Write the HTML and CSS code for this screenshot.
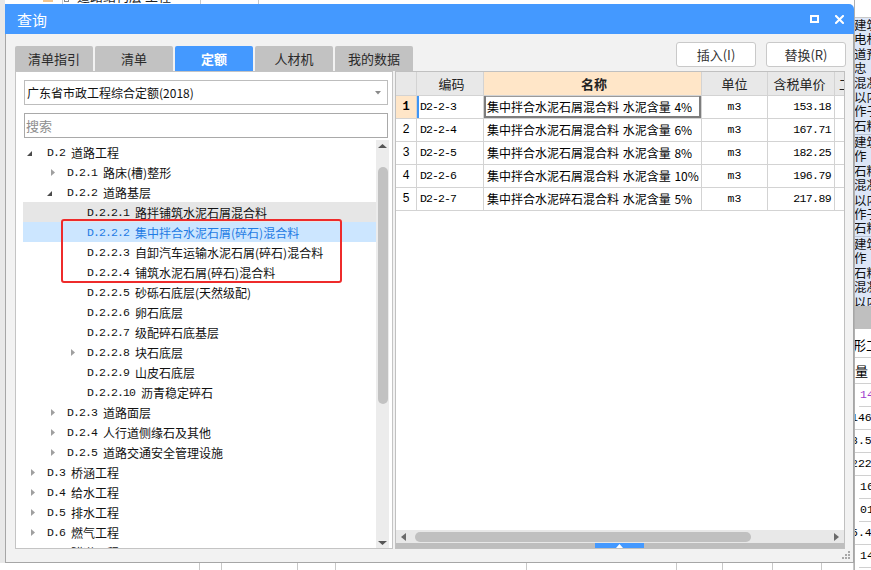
FILE: index.html
```html
<!DOCTYPE html>
<html lang="zh-CN">
<head>
<meta charset="utf-8">
<title>查询</title>
<link rel="stylesheet" href="styles.css">
</head>
<body>
<div class="desktop">
  <div class="bg-top">
    <span class="bt-line l1"></span>
    <span class="bt-mark"></span>
    <span class="bt-box"></span>
    <span class="bt-text">道路结构层 工程</span>
    <span class="bt-line l2"></span>
    <span class="bt-line l3"></span>
  </div>
  <div class="bg-left"></div>
  <div class="bg-right">
    <div class="br-top"></div>
    <div class="br-notes">
      <div class="br-block b1">建筑<br>电杆<br>道预<br>忠<br>混凝<br>以内<br>作子<br>石粒</div>
      <div class="br-block b2">建筑<br>作<br>石粒<br>混凝<br>以内<br>作子<br>石粒</div>
      <div class="br-block b3">建筑<br>作<br>石粒<br>混凝<br>以内<br>作子</div>
    </div>
    <div class="br-gray"></div>
    <div class="br-cell h29">形工</div>
    <div class="br-cell h26">量</div>
    <div class="br-cell num purple">14</div>
    <div class="br-cell num cut">146.</div>
    <div class="br-cell num cut">8.5</div>
    <div class="br-cell num cut">222</div>
    <div class="br-cell num">16</div>
    <div class="br-cell num">01</div>
    <div class="br-cell num cut">5.4</div>
    <div class="br-cell num">14</div>
  </div>
  <div class="bg-bottom">
    <span class="bb-cell" style="width:200px"></span>
    <span class="bb-cell" style="width:22px"></span>
    <span class="bb-cell" style="width:76px"></span>
    <span class="bb-cell" style="width:38px"></span>
    <span class="bb-cell" style="width:191px"></span>
    <span class="bb-cell" style="width:150px"></span>
    <span class="bb-cell" style="width:46px"></span>
    <span class="bb-cell" style="width:50px"></span>
    <span class="bb-cell" style="width:49px"></span>
    <span class="bb-cell" style="width:32px"></span>
  </div>

  <div class="dialog">
    <div class="titlebar">
      <span class="title">查询</span>
      <div class="win-ctrls">
        <svg class="ico-max" width="9" height="8" viewBox="0 0 9 8"><rect x="1" y="1" width="7" height="6" fill="none" stroke="#fff" stroke-width="2"/></svg>
        <svg class="ico-close" width="9" height="9" viewBox="0 0 9 9"><path d="M1 1 L8 8 M8 1 L1 8" stroke="#fff" stroke-width="2" stroke-linecap="square"/></svg>
      </div>
    </div>
    <div class="dlg-body">
      <div class="toolbar">
        <div class="tabs">
          <div class="tab">清单指引</div>
          <div class="tab">清单</div>
          <div class="tab active">定额</div>
          <div class="tab">人材机</div>
          <div class="tab">我的数据</div>
        </div>
        <div class="actions">
          <button class="btn">插入(I)</button>
          <button class="btn">替换(R)</button>
        </div>
      </div>
      <div class="main">
        <div class="left-panel">
          <div class="combo">
            <span class="combo-text">广东省市政工程综合定额(2018)</span>
            <svg width="6" height="4" viewBox="0 0 6 4"><path d="M0 0 H6 L3 3.5 Z" fill="#8a8a8a"/></svg>
          </div>
          <div class="search">搜索</div>
          <div class="tree-wrap">
            <div class="tree">
              <div class="row l0"><svg class="arr" width="24" height="20" viewBox="0 0 24 20"><path d="M9 9 V14 H4 Z" fill="#4a4a4a"/></svg><span class="code">D.2</span><span class="name">道路工程</span></div>
              <div class="row l1"><svg class="arr" width="24" height="20" viewBox="0 0 24 20"><path d="M8 7 L12 10.5 L8 14 Z" fill="#a0a0a0"/></svg><span class="code">D.2.1</span><span class="name">路床(槽)整形</span></div>
              <div class="row l1"><svg class="arr" width="24" height="20" viewBox="0 0 24 20"><path d="M9 9 V14 H4 Z" fill="#4a4a4a"/></svg><span class="code">D.2.2</span><span class="name">道路基层</span></div>
              <div class="row l2 hover"><span class="arr-sp"></span><span class="code">D.2.2.1</span><span class="name">路拌铺筑水泥石屑混合料</span></div>
              <div class="row l2 selected"><span class="arr-sp"></span><span class="code">D.2.2.2</span><span class="name">集中拌合水泥石屑(碎石)混合料</span></div>
              <div class="row l2"><span class="arr-sp"></span><span class="code">D.2.2.3</span><span class="name">自卸汽车运输水泥石屑(碎石)混合料</span></div>
              <div class="row l2"><span class="arr-sp"></span><span class="code">D.2.2.4</span><span class="name">铺筑水泥石屑(碎石)混合料</span></div>
              <div class="row l2"><span class="arr-sp"></span><span class="code">D.2.2.5</span><span class="name">砂砾石底层(天然级配)</span></div>
              <div class="row l2"><span class="arr-sp"></span><span class="code">D.2.2.6</span><span class="name">卵石底层</span></div>
              <div class="row l2"><span class="arr-sp"></span><span class="code">D.2.2.7</span><span class="name">级配碎石底基层</span></div>
              <div class="row l2"><svg class="arr" width="24" height="20" viewBox="0 0 24 20"><path d="M8 7 L12 10.5 L8 14 Z" fill="#a0a0a0"/></svg><span class="code">D.2.2.8</span><span class="name">块石底层</span></div>
              <div class="row l2"><span class="arr-sp"></span><span class="code">D.2.2.9</span><span class="name">山皮石底层</span></div>
              <div class="row l2"><span class="arr-sp"></span><span class="code">D.2.2.10</span><span class="name">沥青稳定碎石</span></div>
              <div class="row l1"><svg class="arr" width="24" height="20" viewBox="0 0 24 20"><path d="M8 7 L12 10.5 L8 14 Z" fill="#a0a0a0"/></svg><span class="code">D.2.3</span><span class="name">道路面层</span></div>
              <div class="row l1"><svg class="arr" width="24" height="20" viewBox="0 0 24 20"><path d="M8 7 L12 10.5 L8 14 Z" fill="#a0a0a0"/></svg><span class="code">D.2.4</span><span class="name">人行道侧缘石及其他</span></div>
              <div class="row l1"><svg class="arr" width="24" height="20" viewBox="0 0 24 20"><path d="M8 7 L12 10.5 L8 14 Z" fill="#a0a0a0"/></svg><span class="code">D.2.5</span><span class="name">道路交通安全管理设施</span></div>
              <div class="row l0"><svg class="arr" width="24" height="20" viewBox="0 0 24 20"><path d="M8 7 L12 10.5 L8 14 Z" fill="#a0a0a0"/></svg><span class="code">D.3</span><span class="name">桥涵工程</span></div>
              <div class="row l0"><svg class="arr" width="24" height="20" viewBox="0 0 24 20"><path d="M8 7 L12 10.5 L8 14 Z" fill="#a0a0a0"/></svg><span class="code">D.4</span><span class="name">给水工程</span></div>
              <div class="row l0"><svg class="arr" width="24" height="20" viewBox="0 0 24 20"><path d="M8 7 L12 10.5 L8 14 Z" fill="#a0a0a0"/></svg><span class="code">D.5</span><span class="name">排水工程</span></div>
              <div class="row l0"><svg class="arr" width="24" height="20" viewBox="0 0 24 20"><path d="M8 7 L12 10.5 L8 14 Z" fill="#a0a0a0"/></svg><span class="code">D.6</span><span class="name">燃气工程</span></div>
              <div class="row l0"><svg class="arr" width="24" height="20" viewBox="0 0 24 20"><path d="M8 7 L12 10.5 L8 14 Z" fill="#a0a0a0"/></svg><span class="code">D.7</span><span class="name">隧道工程</span></div>
            </div>
            <div class="vscroll">
              <svg class="vs-up" width="13" height="8" viewBox="0 0 13 8"><path d="M2 6 L6.5 2 L11 6 Z" fill="#555"/></svg>
              <div class="vs-thumb"></div>
              <svg class="vs-down" width="13" height="8" viewBox="0 0 13 8"><path d="M2 2 L6.5 6 L11 2 Z" fill="#555"/></svg>
            </div>
          </div>
          <div class="annot"></div>
        </div>
        <div class="right-panel">
          <div class="grid">
            <div class="g-row head">
              <div class="c c-no"></div>
              <div class="c c-code">编码</div>
              <div class="c c-name hl">名称</div>
              <div class="c c-unit">单位</div>
              <div class="c c-price">含税单价</div>
              <div class="c c-extra">工程量</div>
            </div>
            <div class="g-row">
              <div class="c c-no cur">1</div>
              <div class="c c-code cur-code">D2-2-3</div>
              <div class="c c-name sel">集中拌合水泥石屑混合料 水泥含量 4%</div>
              <div class="c c-unit">m3</div>
              <div class="c c-price">153.18</div>
              <div class="c c-extra"></div>
            </div>
            <div class="g-row">
              <div class="c c-no">2</div>
              <div class="c c-code">D2-2-4</div>
              <div class="c c-name">集中拌合水泥石屑混合料 水泥含量 6%</div>
              <div class="c c-unit">m3</div>
              <div class="c c-price">167.71</div>
              <div class="c c-extra"></div>
            </div>
            <div class="g-row">
              <div class="c c-no">3</div>
              <div class="c c-code">D2-2-5</div>
              <div class="c c-name">集中拌合水泥石屑混合料 水泥含量 8%</div>
              <div class="c c-unit">m3</div>
              <div class="c c-price">182.25</div>
              <div class="c c-extra"></div>
            </div>
            <div class="g-row">
              <div class="c c-no">4</div>
              <div class="c c-code">D2-2-6</div>
              <div class="c c-name">集中拌合水泥石屑混合料 水泥含量 10%</div>
              <div class="c c-unit">m3</div>
              <div class="c c-price">196.79</div>
              <div class="c c-extra"></div>
            </div>
            <div class="g-row">
              <div class="c c-no">5</div>
              <div class="c c-code">D2-2-7</div>
              <div class="c c-name">集中拌合水泥碎石混合料 水泥含量 5%</div>
              <div class="c c-unit">m3</div>
              <div class="c c-price">217.89</div>
              <div class="c c-extra"></div>
            </div>
          </div>
          <div class="grid-empty"></div>
          <div class="hscroll">
            <svg width="5" height="8" viewBox="0 0 5 8"><path d="M5 0 V8 L0 4 Z" fill="#6a6a6a"/></svg>
            <div class="hs-thumb"></div>
            <svg class="hs-right" width="5" height="8" viewBox="0 0 5 8"><path d="M0 0 V8 L5 4 Z" fill="#6a6a6a"/></svg>
          </div>
          <div class="split-bar">
            <div class="split-btn"><svg width="7" height="4" viewBox="0 0 7 4"><path d="M0 4 L3.5 0 L7 4 Z" fill="#fff"/></svg></div>
          </div>
        </div>
      </div>
      <div class="status">
        <svg class="grip" width="9" height="9" viewBox="0 0 9 9">
          <rect x="6" y="0" width="2" height="2" fill="#a8a8a8"/>
          <rect x="3" y="3" width="2" height="2" fill="#a8a8a8"/>
          <rect x="6" y="3" width="2" height="2" fill="#a8a8a8"/>
          <rect x="0" y="6" width="2" height="2" fill="#a8a8a8"/>
          <rect x="3" y="6" width="2" height="2" fill="#a8a8a8"/>
          <rect x="6" y="6" width="2" height="2" fill="#a8a8a8"/>
        </svg>
      </div>
    </div>
  </div>
</div>
</body>
</html>
```

FILE: styles.css
```css
* { box-sizing: border-box; }
html, body { margin: 0; padding: 0; }
body {
  width: 871px;
  height: 570px;
  overflow: hidden;
  background: #fff;
  font-family: "Noto Sans CJK SC", "Liberation Sans", sans-serif;
  font-size: 12px;
  color: #000;
}
.desktop { position: relative; width: 871px; height: 570px; overflow: hidden; background: #fff; }

/* ---------- background application (behind the dialog) ---------- */
.bg-top { position: absolute; left: 0; top: 0; width: 860px; height: 6px; background: #fff; overflow: hidden; }
.bt-line { position: absolute; top: 0; width: 1px; height: 6px; background: #c8c8c8; }
.bt-line.l1 { left: 62px; }
.bt-line.l2 { left: 200px; }
.bt-line.l3 { left: 258px; }
.bt-mark { position: absolute; left: 43px; top: 0; width: 10px; height: 2px; background: #f3c58d; }
.bt-box { position: absolute; left: 64px; top: -4px; width: 5px; height: 6px; border: 1px solid #888; }
.bt-text { position: absolute; left: 77px; top: -11px; font-size: 13px; line-height: 14px; color: #222; white-space: nowrap; }

.bg-left { position: absolute; left: 0; top: 0; width: 5px; height: 570px; background: #e8e8e8; }

.bg-right { position: absolute; left: 854px; top: 0; width: 17px; height: 570px; background: #fff; overflow: hidden; border-left: 1px solid #b0b0b0; }
.br-top { height: 18px; border-bottom: 1px solid #c8c8c8; }
.br-notes { height: 288px; background: #dce6f7; overflow: hidden; }
.br-block { font-size: 12.5px; line-height: 14.4px; white-space: nowrap; margin-left: -1px; overflow: hidden; color: #111; }
.br-block.b1 { height: 116px; }
.br-block.b2 { height: 102px; border-top: 1px solid #b9c4d6; }
.br-block.b3 { height: 70px; border-top: 1px solid #b9c4d6; }
.br-gray { height: 23px; background: #bfbfbf; }
.br-cell { height: 23px; border-bottom: 1px solid #d0d0d0; font-size: 13px; line-height: 22px; white-space: nowrap; margin-left: -3px; padding-left: 1px; }
.br-cell.h29 { height: 29px; line-height: 32px; }
.br-cell.h26 { height: 26px; line-height: 26px; margin-left: -1px; }
.br-cell.num { font-family: "Liberation Mono", monospace; font-size: 11.5px; margin-left: 4px; }
.br-cell.num.cut { margin-left: -5px; }
.br-cell.purple { color: #a03ccc; }

.bg-bottom { position: absolute; left: 0; top: 563px; width: 854px; height: 7px; display: flex; background: #fff; }
.bb-cell { flex: none; height: 7px; border-right: 1px solid #c8c8c8; }

/* ---------- dialog window ---------- */
.dialog { position: absolute; left: 5px; top: 4px; width: 849px; height: 559px; }
.titlebar {
  height: 30px;
  background: #4499ff;
  border-radius: 0 5px 0 0;
  display: flex;
  align-items: center;
  justify-content: space-between;
  padding: 0 10px 0 12px;
}
.title { color: #fff; font-size: 15px; line-height: 1; }
.win-ctrls { display: flex; align-items: center; gap: 16px; }
.ico-max { display: block; margin-top: -1px; }
.ico-close { display: block; }

.dlg-body {
  height: 529px;
  background: #f2f2f2;
  border: 1px solid #a6a6a6;
  border-top: none;
  display: flex;
  flex-direction: column;
}
.toolbar { flex: none; height: 37px; display: flex; justify-content: space-between; padding: 0 7px 0 9px; }
.tabs { display: flex; gap: 2px; align-self: flex-end; }
.tab {
  width: 78px;
  height: 25px;
  background: #c2c2c2;
  border-radius: 2px 2px 0 0;
  display: flex;
  align-items: center;
  justify-content: center;
  font-size: 13px;
  color: #2a2a2a;
}
.tab.active { background: #4499ff; color: #fff; font-weight: bold; }
.actions { display: flex; gap: 10px; padding-top: 8px; }
.btn {
  width: 80px;
  height: 25px;
  background: #fff;
  border: 1px solid #c9c9c9;
  border-radius: 3px;
  font-family: "Noto Sans CJK SC", "Liberation Sans", sans-serif;
  font-size: 13px;
  color: #333;
  padding: 0;
}

.main { flex: none; height: 478px; display: flex; gap: 2px; padding: 0 8px 0 9px; }

/* left panel */
.left-panel {
  position: relative;
  flex: none;
  width: 378px;
  height: 478px;
  background: #fff;
  border: 1px solid #c4c4c4;
  display: flex;
  flex-direction: column;
}
.combo {
  flex: none;
  height: 25px;
  margin: 8px 4px 0 8px;
  border: 1px solid #bdbdbd;
  display: flex;
  align-items: center;
  justify-content: space-between;
  padding: 0 6px 0 2px;
  font-size: 12px;
  color: #111;
}
.search {
  flex: none;
  height: 25px;
  margin: 8px 4px 0 8px;
  border: 1px solid #a9a9a9;
  padding-left: 1px;
  font-size: 13px;
  line-height: 23px;
  color: #8e8e8e;
}
.tree-wrap { flex: 1; margin: 2px 3px 0 7px; display: flex; overflow: hidden; }
.tree { flex: 1; padding-top: 2px; overflow: hidden; }
.row { height: 20px; display: flex; align-items: center; white-space: nowrap; color: #111; }
.row.l1 { padding-left: 20px; }
.row.l2 { padding-left: 40px; }
.row.hover { background: #e6e6e6; }
.row.selected { background: #cce6ff; color: #1f7be4; }
.arr { flex: none; display: block; }
.arr-sp { flex: none; width: 24px; }
.code { font-family: "Liberation Mono", monospace; font-size: 11.5px; letter-spacing: -0.9px; }
.name { margin-left: 6px; font-size: 12px; }

.vscroll { flex: none; width: 13px; background: #ececec; position: relative; display: flex; flex-direction: column; align-items: center; }
.vs-up { display: block; margin-top: 2px; }
.vs-thumb { width: 10px; height: 237px; margin-top: 17px; background: #c2c2c2; border-radius: 5px; }
.vs-down { display: block; margin-top: auto; margin-bottom: 1px; }

.annot {
  position: absolute;
  left: 45px;
  top: 147px;
  width: 281px;
  height: 64px;
  border: 2px solid #ee2b2b;
  border-radius: 3px;
}

/* right panel */
.right-panel {
  flex: none;
  width: 450px;
  height: 478px;
  background: #fff;
  border: 1px solid #c0c0c0;
  display: flex;
  flex-direction: column;
  overflow: hidden;
}
.grid { flex: none; }
.g-row { display: flex; height: 23px; }
.g-row.head { height: 24px; background: #e8e8e8; }
.c {
  flex: none;
  height: 100%;
  border-right: 1px solid #d3d3d3;
  border-bottom: 1px solid #d3d3d3;
  white-space: nowrap;
  overflow: hidden;
  line-height: 22px;
  font-size: 12px;
}
.head .c { font-size: 13px; line-height: 23px; text-align: center; color: #222; }
.head .c.hl { background: #ffe6c8; font-weight: bold; }
.c-no { width: 21px; text-align: center; font-family: "Liberation Mono", monospace; font-size: 12px; }
.c-code { width: 67px; padding-left: 3px; font-family: "Liberation Mono", monospace; font-size: 11.5px !important; letter-spacing: -0.9px; }
.c-name { width: 218px; padding-left: 3px; word-spacing: 1px; }
.c-unit { width: 66px; text-align: center; font-family: "Liberation Mono", monospace; font-size: 11.5px !important; }
.c-price { width: 67px; text-align: right; padding-right: 3px; font-family: "Liberation Mono", monospace; font-size: 11.5px !important; letter-spacing: -0.6px; }
.c-extra { width: 60px; padding-left: 4px; text-align: left !important; }
.head .c-code, .head .c-unit, .head .c-price { font-family: "Noto Sans CJK SC", sans-serif; font-size: 13px !important; letter-spacing: 0; }
.c.cur { background: #ffe6c8; font-weight: bold; }
.c.cur-code { box-shadow: inset 2px 0 #3f95f5; }
.c.sel { box-shadow: inset 2px 0 #7d7d7d, inset -2px 0 #7d7d7d, inset 0 -2px #7d7d7d, inset 0 1px #9a9a9a; }

.grid-empty { flex: 1; }
.hscroll { flex: none; height: 13px; background: #e8e8e8; display: flex; align-items: center; padding: 0 5px; }
.hscroll svg { display: block; flex: none; }
.hs-thumb { flex: none; width: 336px; height: 10px; margin-left: 9px; background: #c0c0c0; border-radius: 5px; }
.hs-right { margin-left: auto; }
.split-bar { flex: none; height: 5px; background: #bebebe; padding-left: 199px; display: flex; }
.split-btn { width: 49px; height: 5px; background: #4499ff; display: flex; align-items: center; justify-content: center; }
.split-btn svg { display: block; }

.status { flex: 1; display: flex; justify-content: flex-end; align-items: flex-start; padding: 2px 2px 0 0; }
.grip { display: block; }
```
